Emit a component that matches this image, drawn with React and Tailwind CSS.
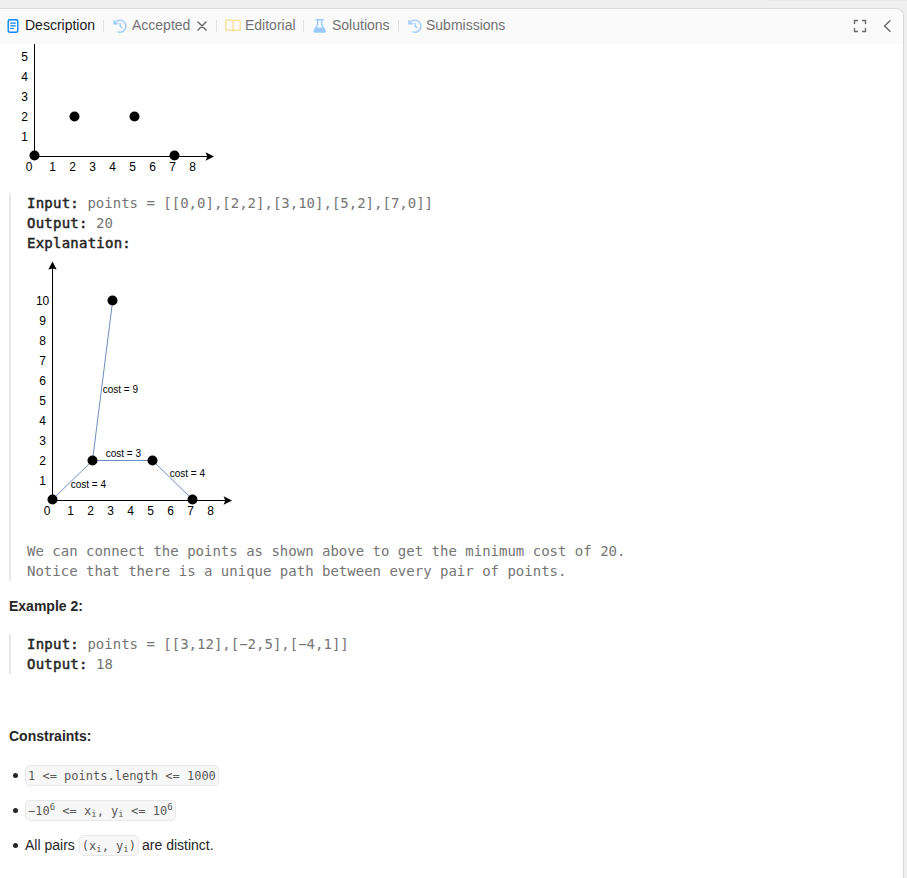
import React from "react";

const MONO = "font-['DejaVu_Sans_Mono','Liberation_Mono',monospace]";

const ALL_ROWS = [1, 2, 3, 4, 5, 6, 7, 8, 9, 10];
const LOWER_ROWS = [1, 2, 3, 4, 5];

function Chart({ connected = false, className = "" }) {
  const top = connected ? 0 : 128;
  const rows = connected ? ALL_ROWS : LOWER_ROWS;
  return (
    <svg
      width="210"
      height={262 - top}
      viewBox={`0 ${top} 210 ${262 - top}`}
      className={`block shrink-0 font-['Liberation_Sans',Arial,sans-serif] ${className}`}
    >
      <path d="M25.5 8V240.5H198" fill="none" stroke="#000" strokeWidth="1" />
      <path d="M25.5 1.5L21.3 9.4L25.5 8.6L29.7 9.4Z" fill="#000" />
      <path d="M205 240.5L196.6 236.3L198.2 240.5L196.6 244.7Z" fill="#000" />
      {connected && (
        <g stroke="#6c8ebf" strokeWidth="1" fill="none">
          <path d="M25.5 239.5L65.5 200.5L85.5 42" />
          <path d="M65.5 200.5H125.5L165.5 239.5" />
        </g>
      )}
      <g fontSize="12" textAnchor="middle" fill="#000">
        {rows.map((n) => (
          <text key={n} x="15.6" y={245 - n * 20}>
            {n}
          </text>
        ))}
        <text x="20" y="255">0</text>
        {[1, 2, 3, 4, 5, 6, 7, 8].map((n) => (
          <text key={n} x={23.6 + n * 20} y="255">
            {n}
          </text>
        ))}
      </g>
      <g fill="#000">
        <circle cx="25.5" cy="239.5" r="5" />
        <circle cx="65.5" cy="200.5" r="5" />
        <circle cx="125.5" cy="200.5" r="5" />
        <circle cx="165.5" cy="239.5" r="5" />
        {connected && <circle cx="85.5" cy="40.5" r="5" />}
      </g>
      {connected && (
        <g fontSize="10" fill="#000">
          <text x="75.7" y="133">cost = 9</text>
          <text x="78.7" y="197">cost = 3</text>
          <text x="43.7" y="228">cost = 4</text>
          <text x="142.7" y="217">cost = 4</text>
        </g>
      )}
    </svg>
  );
}

function HistoryIcon() {
  return (
    <svg width="14" height="14" viewBox="0 0 14 14" fill="none" stroke="#99caff" strokeWidth="1.4" strokeLinecap="round" strokeLinejoin="round">
      <path d="M1.4 4.6A6 6 0 1 1 5 12.9" />
      <path d="M0.8 1.6L1.2 4.8H4.5" />
      <path d="M7.1 4.3V7L8.9 8.8" />
    </svg>
  );
}

function DocIcon() {
  return (
    <svg width="12" height="14" viewBox="0 0 12 14" fill="none" stroke="#0a84ff" strokeLinecap="round">
      <rect x="1.2" y="0.8" width="9.6" height="12.4" rx="1.6" strokeWidth="1.4" />
      <path d="M3.6 4.1H8.4M3.6 6.8H8.4M3.6 9.5H6.4" strokeWidth="1.2" />
    </svg>
  );
}

function BookIcon() {
  return (
    <svg width="16" height="13" viewBox="0 0 16 13" fill="none" stroke="#ffe09c" strokeWidth="1.4" strokeLinejoin="round">
      <path d="M8 2.6C8 1.6 7.2 1.2 6.2 1.2H1.6Q0.8 1.2 0.8 2V10.4Q0.8 11.2 1.6 11.2H6.3C7.2 11.2 8 11.5 8 12.3C8 11.5 8.8 11.2 9.7 11.2H14.4Q15.2 11.2 15.2 10.4V2Q15.2 1.2 14.4 1.2H9.8C8.8 1.2 8 1.6 8 2.6V12" />
    </svg>
  );
}

function FlaskIcon() {
  return (
    <svg width="14" height="14" viewBox="0 0 14 14">
      <path d="M3 0.8H10.3M4.7 1V5.4L2 10.5M8.6 1V5.4L11.3 10.5" fill="none" stroke="#99caff" strokeWidth="1.4" strokeLinecap="round" />
      <path d="M2.1 8.4H11.2L12.5 11.2C13.2 12.6 12.6 13.8 11.2 13.8H2.1C0.7 13.8 0.1 12.6 0.8 11.2Z" fill="#99caff" />
    </svg>
  );
}

function Separator() {
  return <div className="h-3 w-px bg-[#e2e2e2]" />;
}

function TabName({ children }) {
  return <span className="-mt-[2px]">{children}</span>;
}

function Header() {
  return (
    <div className="flex h-[35px] shrink-0 items-center bg-[#fafafa] pb-[2px] text-sm text-[#737373]">
      <div className="ml-[7px] flex w-[96px] items-center gap-[6px] text-[#1a1a1a]">
        <DocIcon />
        <TabName>Description</TabName>
      </div>
      <Separator />
      <div className="ml-[9px] flex w-[103px] items-center gap-[5px]">
        <HistoryIcon />
        <TabName>Accepted</TabName>
        <svg width="10" height="10" viewBox="0 0 10 10" className="ml-[2px]" stroke="#6a6a6a" strokeWidth="1.5" strokeLinecap="round">
          <path d="M1 1L9 9M9 1L1 9" />
        </svg>
      </div>
      <Separator />
      <div className="ml-[8px] flex w-[78px] items-center gap-[4px]">
        <BookIcon />
        <TabName>Editorial</TabName>
      </div>
      <Separator />
      <div className="ml-[9px] flex w-[85px] items-center gap-[5px]">
        <FlaskIcon />
        <TabName>Solutions</TabName>
      </div>
      <Separator />
      <div className="ml-[9px] flex items-center gap-[4px]">
        <HistoryIcon />
        <TabName>Submissions</TabName>
      </div>
      <div className="ml-auto mr-[12px] flex items-center gap-[16px]">
        <svg width="14" height="14" viewBox="0 0 14 14" fill="none" stroke="#6a6a6a" strokeWidth="1.4" strokeLinejoin="round">
          <path d="M1.5 5V1.5H5M9 1.5H12.5V5M12.5 9V12.5H9M5 12.5H1.5V9" />
        </svg>
        <svg width="8" height="12" viewBox="0 0 8 12" fill="none" stroke="#6a6a6a" strokeWidth="1.4" strokeLinecap="round" strokeLinejoin="round">
          <path d="M7 0.8L1.5 6L7 11.2" />
        </svg>
      </div>
    </div>
  );
}

function Code({ children }) {
  return (
    <code className={`inline-flex h-[21px] items-center whitespace-pre rounded-[5px] border border-[#e8e8e8] bg-[#f7f7f7] px-[2px] text-xs text-[#595959] ${MONO}`}>
      <span className="leading-[16px]">{children}</span>
    </code>
  );
}

function Sub() {
  return <sub className="text-[9px]">i</sub>;
}

function Sup() {
  return <sup className="text-[9px]">6</sup>;
}

function Bullet({ children }) {
  return (
    <li className="flex h-[21px] items-center">
      <span className="ml-[4px] mr-[7px] size-[5px] rounded-full bg-[#262626]" />
      {children}
    </li>
  );
}

function Label({ children }) {
  return (
    <strong className="font-normal tracking-[0.24px] text-[#262626] [-webkit-text-stroke:0.5px_#262626]">
      {children}
    </strong>
  );
}

function Block({ className = "", children }) {
  return (
    <div className={`border-l-2 border-[#e8e8e8] pl-[16px] text-sm leading-5 whitespace-pre text-[#757575] ${MONO} ${className}`}>
      {children}
    </div>
  );
}

export default function App() {
  return (
    <div className="flex h-[878px] w-[907px] flex-col overflow-hidden bg-[#efefef] font-['Liberation_Sans',Arial,sans-serif]">
      <div className="flex h-[8px] justify-end">
        <div className="h-px w-[139px] bg-[#e7e7e7]" />
      </div>
      <div className="flex w-[904px] grow flex-col overflow-hidden rounded-tr-[8px] border-t border-r border-[#d9d9d9] bg-white">
        <Header />
        <div className="flex grow flex-col overflow-hidden pl-[9px] text-sm leading-5 text-[#262626]">
          <Chart />
          <Block className="mt-[15px]">
            <div><Label>Input:</Label> points = [[0,0],[2,2],[3,10],[5,2],[7,0]]</div>
            <div><Label>Output:</Label> 20</div>
            <div><Label>Explanation:</Label></div>
            <Chart connected className="mt-[7px] mb-[19px]" />
            <div>We can connect the points as shown above to get the minimum cost of 20.</div>
            <div>Notice that there is a unique path between every pair of points.</div>
          </Block>
          <p className="mt-[15px] font-bold">Example 2:</p>
          <Block className="mt-[18px]">
            <div><Label>Input:</Label> points = [[3,12],[−2,5],[−4,1]]</div>
            <div><Label>Output:</Label> 18</div>
          </Block>
          <p className="mt-[52px] font-bold">Constraints:</p>
          <ul className="mt-[19px] flex flex-col gap-[14px]">
            <Bullet><Code>1 &lt;= points.length &lt;= 1000</Code></Bullet>
            <Bullet><Code>−10<Sup /> &lt;= x<Sub />, y<Sub /> &lt;= 10<Sup /></Code></Bullet>
            <Bullet>
              <span className="-mt-[2px] mr-[4px]">All pairs</span>
              <Code>(x<Sub />, y<Sub />)</Code>
              <span className="-mt-[2px] ml-[3px]">are distinct.</span>
            </Bullet>
          </ul>
        </div>
      </div>
    </div>
  );
}
